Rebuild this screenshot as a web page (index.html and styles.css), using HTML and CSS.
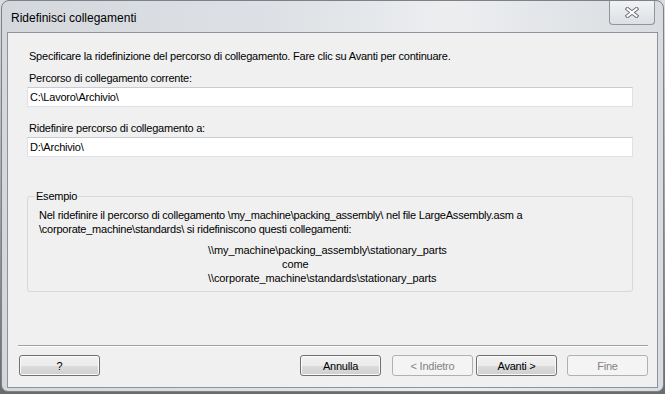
FILE: index.html
```html
<!DOCTYPE html>
<html lang="it">
  <head>
    <meta charset="UTF-8" />
    <title>Ridefinisci collegamenti</title>
    <link rel="stylesheet" href="styles.css">
  </head>
  <body>
    <div class="window">
      <div class="titlebar">
        <span class="title">Ridefinisci collegamenti</span>
        <button class="close" aria-label="Chiudi">
          <svg width="14" height="11" viewBox="0 0 14 11">
            <path d="M2.5 2 L11.5 9 M11.5 2 L2.5 9" stroke="#6b6f74" stroke-width="4" stroke-linecap="square" />
            <path d="M2.5 2 L11.5 9 M11.5 2 L2.5 9" stroke="#ffffff" stroke-width="2" stroke-linecap="square" />
          </svg>
        </button>
      </div>

      <div class="client">
        <p class="intro">Specificare la ridefinizione del percorso di collegamento. Fare clic su Avanti per continuare.</p>

        <label class="field__label">Percorso di collegamento corrente:</label>
        <div class="textbox">C:\Lavoro\Archivio\</div>

        <label class="field__label second">Ridefinire percorso di collegamento a:</label>
        <div class="textbox">D:\Archivio\</div>

        <fieldset class="example">
          <legend>Esempio</legend>
          <p class="example__text">
            Nel ridefinire il percorso di collegamento \my_machine\packing_assembly\ nel file LargeAssembly.asm a<br />
            \corporate_machine\standards\ si ridefiniscono questi collegamenti:
          </p>
          <div class="example__paths">
            <div>\\my_machine\packing_assembly\stationary_parts</div>
            <div class="come">come</div>
            <div>\\corporate_machine\standards\stationary_parts</div>
          </div>
        </fieldset>

        <div class="footer">
          <div class="separator"></div>
          <div class="buttons">
            <button class="btn">?</button>
            <div class="buttons__right">
              <button class="btn">Annulla</button>
              <button class="btn btn--disabled back">&lt; Indietro</button>
              <button class="btn next">Avanti &gt;</button>
              <button class="btn btn--disabled finish">Fine</button>
            </div>
          </div>
        </div>
      </div>
    </div>
  </body>
</html>
```

FILE: styles.css
```css
* {
  padding: 0;
  margin: 0;
  box-sizing: border-box;
}

body {
  width: 665px;
  height: 394px;
  overflow: hidden;
  background: linear-gradient(#dcdcdc, #6b6b6b);
  font-family: "Liberation Sans", Arial, sans-serif;
  font-size: 11px;
  letter-spacing: -0.23px;
  color: #000;
}

.window {
  height: 392px;
  margin: 0 1px;
  padding: 0 5px 3px;
  display: flex;
  flex-direction: column;
  border: 1px solid #7b8289;
  border-radius: 8px 8px 7px 7px;
  background: linear-gradient(
    to right,
    #d4d8dd 0%,
    #dde0e4 40%,
    #eceef0 68%,
    #d9dce0 100%
  );
}

.titlebar {
  height: 31px;
  display: flex;
  justify-content: space-between;
  align-items: flex-start;
}

.title {
  padding: 10px 0 0 4px;
  font-size: 12px;
  line-height: 14px;
  letter-spacing: 0;
}

.close {
  width: 46px;
  height: 24px;
  margin-right: 3px;
  display: flex;
  justify-content: center;
  align-items: center;
  border: 1px solid #8d959d;
  border-top: 0;
  border-radius: 0 0 4px 4px;
  background: linear-gradient(#f1f2f4, #dde0e4);
}

.client {
  flex: 1;
  display: flex;
  flex-direction: column;
  padding: 0 24px 11px 19px;
  border: 1px solid #8b949c;
  background: #f0f0f0;
  line-height: 14px;
}

.intro {
  margin: 16px 0 0 2px;
}

.field__label {
  display: block;
  margin: 8px 0 0 2px;
}

.field__label.second {
  margin-top: 14px;
}

.textbox {
  height: 20px;
  margin-top: 2px;
  padding: 2px 0 0 2px;
  border: 1px solid #dde2e8;
  border-top-color: #c9cdd3;
  background: #fff;
}

.example {
  margin-top: 32px;
  padding: 4px 0 6px 11px;
  border: 1px solid #d5d9dd;
  border-radius: 3px;
  min-inline-size: 0;
}

.example legend {
  margin-left: -4px;
  padding: 0 1px;
  line-height: 14px;
}

.example__text {
  margin-top: 1px;
}

.example__paths {
  margin-top: 7px;
  padding-left: 169px;
  letter-spacing: -0.1px;
}

.come {
  padding-left: 74px;
}

.footer {
  margin: auto -24px 0 -19px;
  padding: 0 9px 0 10px;
}

.separator {
  height: 2px;
  border-top: 1px solid #a0a0a0;
  border-bottom: 1px solid #ffffff;
}

.buttons {
  margin-top: 8px;
  display: flex;
  justify-content: space-between;
}

.buttons__right {
  display: flex;
}

.btn {
  width: 81px;
  height: 21px;
  border: 1px solid #707070;
  border-radius: 3px;
  background: linear-gradient(#f2f2f2 0%, #ebebeb 50%, #dddddd 51%, #cfcfcf 100%);
  box-shadow: inset 0 0 0 1px #fbfbfb;
  font-family: inherit;
  font-size: 11px;
  letter-spacing: -0.23px;
  color: #000;
}

.buttons > .btn {
  margin-left: 1px;
}

.btn--disabled {
  border-color: #adb2b5;
  background: #f4f4f4;
  box-shadow: none;
  color: #838383;
}

.back {
  margin-left: 11px;
}

.next {
  margin-left: 3px;
}

.finish {
  margin-left: 10px;
}
```
